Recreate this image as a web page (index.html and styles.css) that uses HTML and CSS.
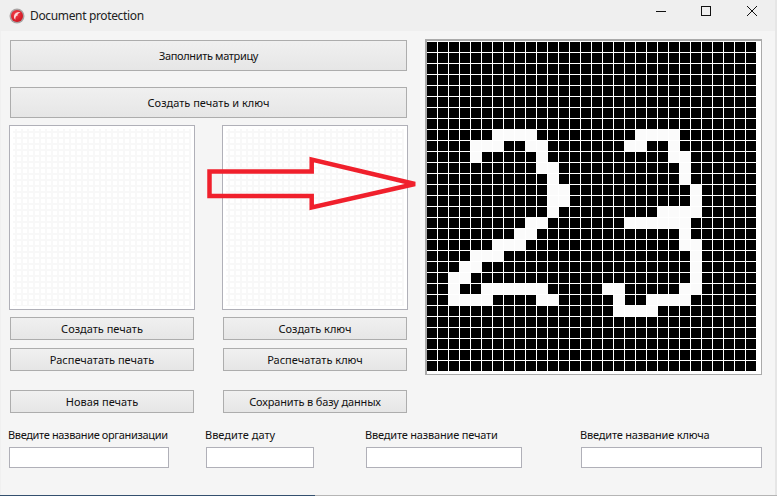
FILE: index.html
```html
<!DOCTYPE html>
<html lang="ru">
<head>
<meta charset="utf-8">
<title>Document protection</title>
<link rel="stylesheet" href="styles.css">
</head>
<body>
<div class="window">
  <header class="titlebar">
    <svg class="app-icon" viewBox="0 0 16 16" width="16" height="16">
      <defs>
        <radialGradient id="ball" cx=".4" cy=".35" r=".75"><stop offset="0" stop-color="#f6404a"/><stop offset="1" stop-color="#c8101c"/></radialGradient>
      </defs>
      <circle cx="8" cy="8" r="7.500" fill="#a9a3a3"/>
      <circle cx="8" cy="8" r="6" fill="url(#ball)"/>
      <path d="M11.500 4.200C8.500 3.600 5.600 5.200 5 8c-.3 1.600.3 3 1.400 3.800C6 9.600 7 7.600 9 7.200 7.800 6.600 9.500 5 11.500 4.200z" fill="#fbdada"/>
    </svg>
    <span class="title">Document protection</span>
    <div class="controls">
      <svg class="ctl ctl-min" viewBox="0 0 10 10" width="10" height="10"><path d="M0 5.500h10" stroke="#111" fill="none"/></svg>
      <svg class="ctl ctl-max" viewBox="0 0 10 10" width="10" height="10"><rect x=".5" y=".5" width="9" height="9" stroke="#111" fill="none"/></svg>
      <svg class="ctl ctl-close" viewBox="0 0 10 10" width="10" height="10"><path d="M0 0l10 10M10 0L0 10" stroke="#111" fill="none"/></svg>
    </div>
  </header>
  <main class="client">
    <div class="top">
      <section class="left">
        <button class="btn btn-wide btn-tight">Заполнить матрицу</button>
        <button class="btn btn-wide">Создать печать и ключ</button>
        <div class="columns">
          <div class="column">
            <div class="panel"></div>
            <button class="btn btn-first">Создать печать</button>
            <button class="btn">Распечатать печать</button>
            <button class="btn btn-last">Новая печать</button>
          </div>
          <div class="column">
            <div class="panel"></div>
            <button class="btn btn-first">Создать ключ</button>
            <button class="btn">Распечатать ключ</button>
            <button class="btn btn-last btn-snug">Сохранить в базу данных</button>
          </div>
        </div>
      </section>
      <section class="board">
        <svg class="matrix" width="329" height="329" viewBox="0 0 329 329">
          <defs>
            <pattern id="off" width="11" height="11" patternUnits="userSpaceOnUse"><rect width="10" height="10" fill="#000"/></pattern>
            <pattern id="lit" width="11" height="11" patternUnits="userSpaceOnUse"><rect width="11" height="11" fill="#fff"/><rect width="10" height="10" fill="#fbfbfb"/></pattern>
          </defs>
          <rect width="329" height="329" fill="url(#off)"/>
          <path fill="url(#lit)" d="M66 88h44v11h-44zM209 88h44v11h-44zM44 99h33v11h-33zM99 99h22v11h-22zM198 99h22v11h-22zM242 99h11v11h-11zM44 110h11v11h-11zM110 110h11v11h-11zM242 110h22v11h-22zM110 121h22v11h-22zM253 121h11v11h-11zM121 132h11v11h-11zM253 132h11v11h-11zM121 143h22v11h-22zM264 143h11v11h-11zM121 154h22v11h-22zM264 154h11v11h-11zM121 165h11v11h-11zM231 165h44v11h-44zM99 176h22v11h-22zM198 176h66v11h-66zM88 187h22v11h-22zM253 187h11v11h-11zM66 198h33v11h-33zM253 198h22v11h-22zM44 209h33v11h-33zM264 209h11v11h-11zM33 220h22v11h-22zM264 220h11v11h-11zM22 231h22v11h-22zM264 231h11v11h-11zM22 242h11v11h-11zM55 242h66v11h-66zM176 242h22v11h-22zM253 242h22v11h-22zM22 253h44v11h-44zM110 253h22v11h-22zM187 253h11v11h-11zM220 253h44v11h-44zM187 264h44v11h-44z"/>
        </svg>
      </section>
    </div>
    <form class="fields">
      <label class="field field-org"><span>Введите название организации</span><input type="text"></label>
      <label class="field field-date"><span>Введите дату</span><input type="text"></label>
      <label class="field field-seal"><span>Введите название печати</span><input type="text"></label>
      <label class="field field-key"><span>Введите название ключа</span><input type="text"></label>
    </form>
    <svg class="arrow" width="216" height="60" viewBox="0 0 216 60">
      <path d="M4.500 16.500H106.700V4.500L210 29 106.700 52.500V41H4.500z" fill="none" stroke="#f0202c" stroke-width="4.500" stroke-linejoin="miter" stroke-miterlimit="3"/>
    </svg>
  </main>
</div>
</body>
</html>
```
FILE: styles.css
```css
* { box-sizing: border-box; }
html, body { margin: 0; padding: 0; }
body {
  width: 777px;
  height: 496px;
  overflow: hidden;
  background: linear-gradient(90deg, #34506e 315px, #b5b5b5 315px) bottom / 100% 1px no-repeat, #e6e6e6;
  font-family: "Noto Sans", sans-serif;
  font-size: 11px;
  color: #111;
}
.window {
  width: 775px;
  height: 495px;
  display: flex;
  flex-direction: column;
  background: #f0f0f0;
}
.titlebar {
  height: 31px;
  flex: none;
  display: flex;
  align-items: center;
  padding: 0 0 0 9px;
  background: #efefef;
}
.app-icon { flex: none; }
.title { margin-left: 5px; font-size: 12px; letter-spacing: -.35px; color: #222; }
.controls { margin-left: auto; display: flex; align-items: center; margin-right: 18px; margin-bottom: 9px; }
.ctl { display: block; }
.ctl-max { margin-left: 35px; }
.ctl-close { margin-left: 36px; }
.client {
  position: relative;
  flex: 1;
  margin-left: 1px;
  background: #f5f5f5;
  display: flex;
  flex-direction: column;
}
.top { display: flex; padding-left: 8px; height: 397px; }
.left { width: 399px; display: flex; flex-direction: column; padding-top: 9px; }
.btn {
  display: block;
  font: inherit;
  letter-spacing: 0;
  color: #111;
  border: 1px solid #adadad;
  border-radius: 0;
  background: linear-gradient(#f0f0f0, #e6e6e6);
  padding: 0;
  width: 184px;
  height: 23px;
  margin: 8px 0 0 1px;
}
.btn-wide { width: 397px; height: 31px; margin: 0 0 16px 1px; }
.btn-wide + .btn-wide { margin-bottom: 7px; }
.btn-tight { letter-spacing: -.35px; }
.btn-snug { letter-spacing: -.15px; }
.btn-first { margin-top: 7px; }
.btn-last { margin-top: 19px; }
.columns { display: flex; gap: 27px; }
.column { width: 186px; }
.panel {
  width: 186px;
  height: 185px;
  border: 1px solid #b0b0b8;
  background-color: #fff;
  background-image:
    linear-gradient(#f8f8f8 2px, transparent 2px),
    linear-gradient(90deg, #f8f8f8 2px, transparent 2px);
  background-size: 6px 6px;
  background-position: 5px 5px;
  box-shadow: inset 0 0 0 3px #fff;
}
.board {
  margin-left: 17px;
  margin-top: 8px;
  width: 337px;
  height: 336px;
  background: #fff;
  border: 1px solid #aaa;
  border-width: 2px 1px 1px 2px;
  padding: 1px 0 0 0;
}
.matrix { display: block; }
.fields { display: flex; padding-left: 8px; }
.field { display: flex; flex-direction: column; align-items: flex-start; flex: none; }
.field span { height: 17px; line-height: 13px; margin-left: -1px; white-space: nowrap; }
.field input {
  width: 100%;
  height: 21px;
  padding: 0;
  border: 1px solid #b0b0b8;
  background: #fff;
  border-radius: 0;
  outline: none;
  margin-top: 2px;
}
.field-org { width: 160px; letter-spacing: -.35px; }
.field-date { width: 108px; margin-left: 37px; }
.field-seal { width: 156px; margin-left: 52px; letter-spacing: -.18px; }
.field-key { width: 181px; margin-left: 59px; letter-spacing: -.18px; }
.arrow { position: absolute; left: 204px; top: 124px; overflow: visible; }
```
